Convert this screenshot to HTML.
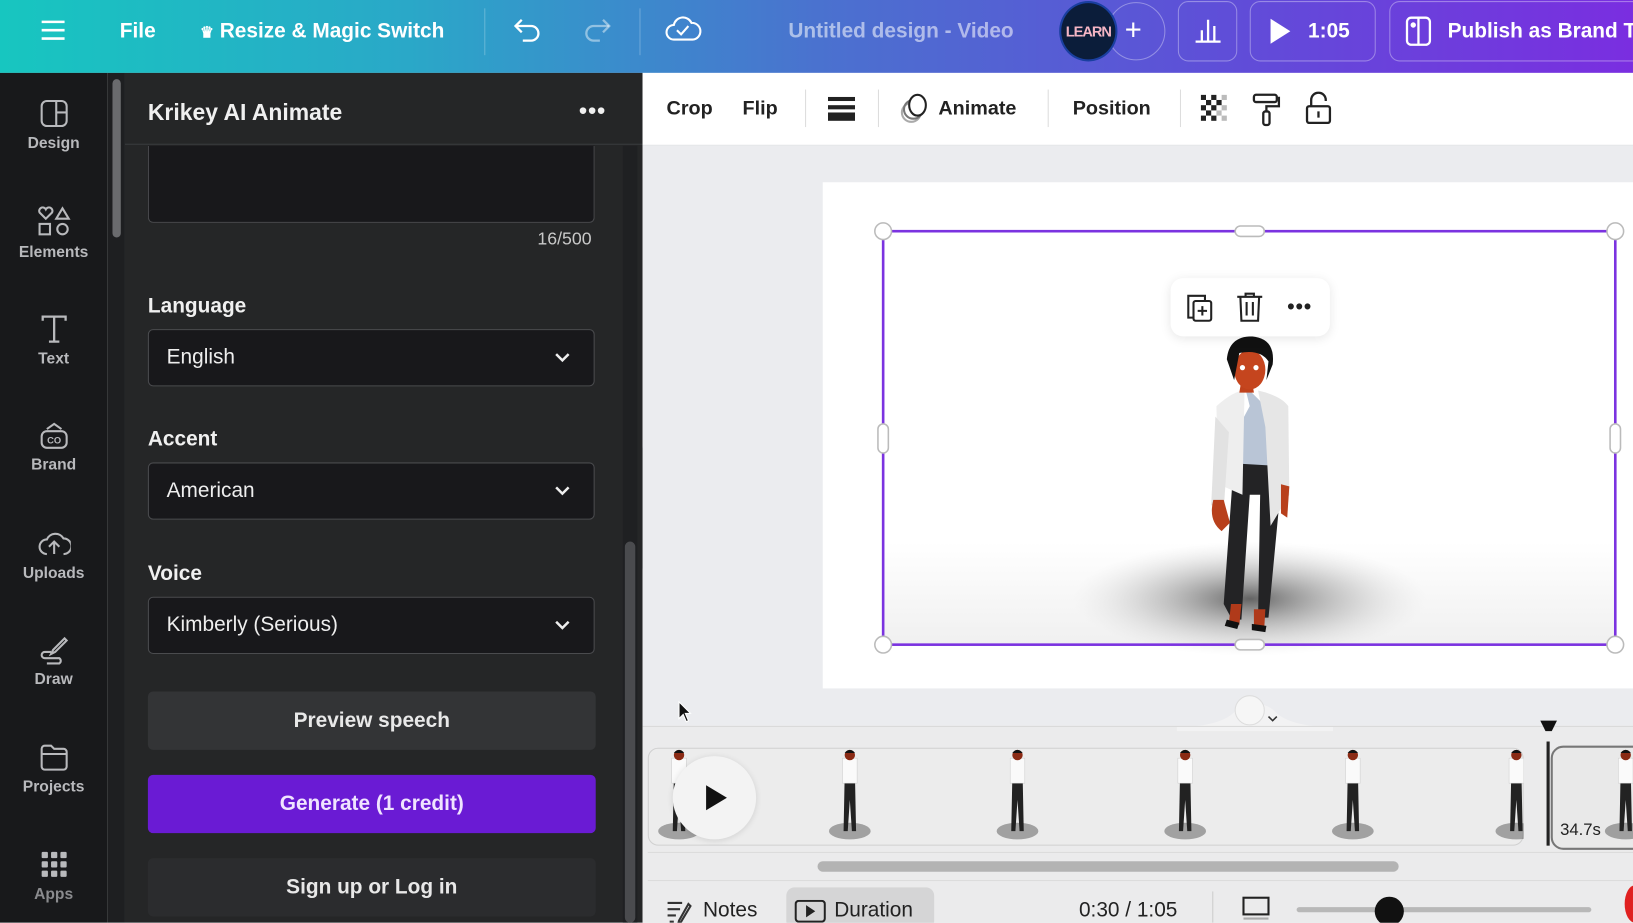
<!DOCTYPE html>
<html><head><meta charset="utf-8"><style>
*{margin:0;padding:0;box-sizing:border-box}
html,body{width:1633px;height:923px;overflow:hidden;background:#ebecef;font-family:"Liberation Sans",sans-serif}
#s{position:absolute;left:0;top:0;width:1568px;height:886px;transform:scale(1.04145);transform-origin:0 0;overflow:hidden}
.a{position:absolute}
.top{left:0;top:0;width:1568px;height:70px;background:linear-gradient(90deg,#17c6c0 0%,#2aa8c8 25%,#4a72cf 50%,#5f4ed8 75%,#7a2ee0 100%)}
.tt{color:#fff;font-size:20px;font-weight:bold;white-space:nowrap}
.pill{border:1.5px solid rgba(255,255,255,.35);border-radius:10px;height:58px;top:1px}
.side{left:0;top:70px;width:103px;height:816px;background:#18191b}
.si{width:103px;text-align:center;color:#b8b9bc;font-size:15px;font-weight:bold}
.si svg{display:block;margin:0 auto 6px}
.lab{color:#f0f0f0;font-size:20px;font-weight:bold}
.dd{left:142px;width:429px;height:55px;background:#18181b;border:1.5px solid #4a4b4e;border-radius:5px;color:#eee;font-size:20px;padding:15px 17px}
.dd svg{position:absolute;right:22px;top:20px}
.btn{left:142px;width:430px;height:56px;border-radius:5px;color:#e8e8e8;font-size:20px;font-weight:bold;text-align:center;line-height:56px}
.tb{color:#222;font-size:19px;font-weight:bold}
</style></head><body><div id="s">
<div class="a top"></div>
<svg class="a" style="left:39px;top:18px" width="24" height="22"><g stroke="#fff" stroke-width="2.5"><line x1="1" y1="3" x2="23" y2="3"/><line x1="1" y1="11" x2="23" y2="11"/><line x1="1" y1="19" x2="23" y2="19"/></g></svg>
<div class="a tt" style="left:115px;top:19px">File</div>
<div class="a tt" style="left:192px;top:19px"><span style="font-size:15px">♛</span> Resize &amp; Magic Switch</div>
<div class="a" style="left:465px;top:8px;width:1px;height:45px;background:rgba(255,255,255,.25)"></div>
<svg class="a" style="left:492px;top:15px" width="30" height="28" fill="none" stroke="#fff" stroke-width="2.2"><path d="M9 4 L3 10 L9 16"/><path d="M3 10 H18 a7 7 0 0 1 0 14 H10"/></svg>
<svg class="a" style="left:558px;top:15px" width="30" height="28" fill="none" stroke="rgba(255,255,255,.45)" stroke-width="2.2"><path d="M21 4 L27 10 L21 16"/><path d="M27 10 H12 a7 7 0 0 0 0 14 H18"/></svg>
<div class="a" style="left:614px;top:8px;width:1px;height:45px;background:rgba(255,255,255,.25)"></div>
<svg class="a" style="left:638px;top:13px" width="36" height="30" fill="none" stroke="#fff" stroke-width="2"><path d="M9 25 a7 7 0 0 1 0-14 a9 9 0 0 1 17-2 a7 7 0 0 1 1 16 Z"/><path d="M12 16 l4 4 l7-8"/></svg>
<div class="a" style="left:757px;top:19px;color:rgba(255,255,255,.55);font-size:20px;font-weight:bold">Untitled design - Video</div>
<div class="a" style="left:1063px;top:2px;width:56px;height:56px;border-radius:50%;border:1.5px solid rgba(255,255,255,.35)"></div>
<div class="a" style="left:1017px;top:1px;width:56px;height:58px;border-radius:50%;background:#0b1d3a;border:2px solid #1a3fa0;color:#f4b5c4;font-size:14px;font-weight:bold;text-align:center;line-height:54px;letter-spacing:-1px">LEARN</div>
<div class="a tt" style="left:1080px;top:13px;font-size:28px;font-weight:normal">+</div>
<div class="a pill" style="left:1131px;width:57px"></div>
<svg class="a" style="left:1145px;top:15px" width="30" height="28" stroke="#fff" stroke-width="2.2"><line x1="3" y1="25" x2="27" y2="25"/><line x1="9" y1="24" x2="9" y2="14"/><line x1="15" y1="24" x2="15" y2="4"/><line x1="21" y1="24" x2="21" y2="10"/></svg>
<div class="a pill" style="left:1200px;width:121px"></div>
<svg class="a" style="left:1218px;top:17px" width="22" height="26"><path d="M2 1 L21 13 L2 25 Z" fill="#fff"/></svg>
<div class="a tt" style="left:1256px;top:19px">1:05</div>
<div class="a pill" style="left:1334px;width:260px"></div>
<svg class="a" style="left:1348px;top:15px" width="28" height="30" fill="none" stroke="#fff" stroke-width="2.2"><rect x="3" y="2" width="22" height="26" rx="4"/><line x1="14" y1="2" x2="14" y2="28"/><circle cx="9" cy="9" r="1.5" fill="#fff"/></svg>
<div class="a tt" style="left:1390px;top:19px">Publish as Brand T</div>

<div class="a side"></div>
<div class="a" style="left:103px;top:70px;width:17px;height:816px;background:#1e1f21"></div>
<div class="a" style="left:108px;top:76px;width:8px;height:152px;border-radius:4px;background:#6a6b6e"></div>
<div class="a si" style="top:95px"><svg width="28" height="28" fill="none" stroke="#b8b9bc" stroke-width="2"><rect x="2" y="2" width="24" height="24" rx="5"/><line x1="16" y1="2" x2="16" y2="26"/><line x1="16" y1="13" x2="26" y2="13"/></svg>Design</div>
<div class="a si" style="top:198px"><svg width="34" height="30" fill="none" stroke="#b8b9bc" stroke-width="2"><path d="M9 12 L3 6 a3 3 0 0 1 6-3 a3 3 0 0 1 6 3 Z"/><path d="M25 2 L31 12 H19 Z"/><rect x="3" y="17" width="10" height="10"/><circle cx="25" cy="22" r="5"/></svg>Elements</div>
<div class="a si" style="top:302px"><svg width="28" height="28" fill="none" stroke="#b8b9bc" stroke-width="2.2"><path d="M3 6 V2 H25 V6 M14 2 V26 M9 26 H19"/></svg>Text</div>
<div class="a si" style="top:404px"><svg width="30" height="28" fill="none" stroke="#b8b9bc" stroke-width="2"><path d="M8 8 L15 3 L22 8"/><rect x="3" y="10" width="24" height="16" rx="5"/><text x="15" y="22" font-size="9" text-anchor="middle" fill="#b8b9bc" stroke="none" font-family="Liberation Sans" font-weight="bold">CO</text></svg>Brand</div>
<div class="a si" style="top:508px"><svg width="32" height="28" fill="none" stroke="#b8b9bc" stroke-width="2"><path d="M9 24 a7 7 0 0 1 0-14 a9 9 0 0 1 16-1 a7 7 0 0 1 0 15"/><path d="M16 24 V13 M11 17 l5-5 l5 5"/></svg>Uploads</div>
<div class="a si" style="top:610px"><svg width="30" height="28" fill="none" stroke="#b8b9bc" stroke-width="2"><path d="M25 3 L14 14 L12 18 L16 16 L27 5 Z"/><path d="M12 16 H6 a3 3 0 0 0 0 6 H20 a3 3 0 0 1 0 5 H8"/></svg>Draw</div>
<div class="a si" style="top:713px"><svg width="30" height="28" fill="none" stroke="#b8b9bc" stroke-width="2"><path d="M3 6 a3 3 0 0 1 3-3 H12 L15 6 H24 a3 3 0 0 1 3 3 V23 a3 3 0 0 1-3 3 H6 a3 3 0 0 1-3-3 Z"/><line x1="3" y1="11" x2="27" y2="11"/></svg>Projects</div>
<div class="a si" style="top:816px"><svg width="28" height="28" fill="#b8b9bc"><rect x="2" y="2" width="6" height="6" rx="1"/><rect x="11" y="2" width="6" height="6" rx="1"/><rect x="20" y="2" width="6" height="6" rx="1"/><rect x="2" y="11" width="6" height="6" rx="1"/><rect x="11" y="11" width="6" height="6" rx="1"/><rect x="20" y="11" width="6" height="6" rx="1"/><rect x="2" y="20" width="6" height="6" rx="1"/><rect x="11" y="20" width="6" height="6" rx="1"/><rect x="20" y="20" width="6" height="6" rx="1"/></svg><span style="color:#8a8b8e">Apps</span></div>

<div class="a" style="left:120px;top:70px;width:497px;height:816px;background:#252627"></div>
<div class="a" style="left:120px;top:138px;width:497px;height:1px;background:#3a3b3d"></div>
<div class="a" style="left:142px;top:95px;color:#f0f0f0;font-size:22px;font-weight:bold">Krikey AI Animate</div>
<div class="a" style="left:556px;top:94px;color:#f0f0f0;font-size:22px;font-weight:bold;letter-spacing:1px">•••</div>
<div class="a" style="left:142px;top:140px;width:429px;height:74px;background:#18181b;border:1.5px solid #4a4b4e;border-top:none;border-radius:0 0 5px 5px"></div>
<div class="a" style="left:516px;top:220px;color:#c8c8c8;font-size:17px">16/500</div>
<div class="a" style="left:598px;top:140px;width:14px;height:746px;background:#1f2022"></div>
<div class="a" style="left:600px;top:520px;width:10px;height:366px;border-radius:5px;background:#4a4b4e"></div>
<div class="a lab" style="left:142px;top:283px">Language</div>
<div class="a dd" style="top:316px">English<svg width="16" height="12" fill="none" stroke="#eee" stroke-width="2.4"><path d="M2 3 L8 9 L14 3"/></svg></div>
<div class="a lab" style="left:142px;top:411px">Accent</div>
<div class="a dd" style="top:444px">American<svg width="16" height="12" fill="none" stroke="#eee" stroke-width="2.4"><path d="M2 3 L8 9 L14 3"/></svg></div>
<div class="a lab" style="left:142px;top:540px">Voice</div>
<div class="a dd" style="top:573px">Kimberly (Serious)<svg width="16" height="12" fill="none" stroke="#eee" stroke-width="2.4"><path d="M2 3 L8 9 L14 3"/></svg></div>
<div class="a btn" style="top:664px;background:#333436">Preview speech</div>
<div class="a btn" style="top:744px;background:#6a1bd4;color:#f0e4ff">Generate (1 credit)</div>
<div class="a btn" style="top:824px;background:#2b2c2e">Sign up or Log in</div>
<svg class="a" style="left:617px;top:428px" width="20" height="120"><path d="M0 0 C0 10 18 12 18 30 V90 C18 108 0 110 0 120 Z" fill="#18191b"/><path d="M10 55 L6 59 L10 63" stroke="#ccc" stroke-width="2" fill="none"/></svg>

<div class="a" style="left:617px;top:70px;width:951px;height:70px;background:#fff;border-bottom:1px solid #e2e3e6"></div>
<div class="a tb" style="left:640px;top:94px">Crop</div>
<div class="a tb" style="left:713px;top:94px">Flip</div>
<div class="a" style="left:773px;top:86px;width:1px;height:36px;background:#ddd"></div>
<svg class="a" style="left:795px;top:93px" width="26" height="24" fill="#222"><rect x="0" y="0" width="26" height="4"/><rect x="0" y="8" width="26" height="4"/><rect x="0" y="15" width="26" height="8"/></svg>
<div class="a" style="left:843px;top:86px;width:1px;height:36px;background:#ddd"></div>
<svg class="a" style="left:862px;top:88px" width="32" height="32" fill="none" stroke-width="2"><circle cx="13" cy="20" r="9" stroke="#aaa"/><circle cx="15" cy="17" r="9" stroke="#777"/><ellipse cx="19" cy="13" rx="8" ry="10" stroke="#222" fill="#fff"/></svg>
<div class="a tb" style="left:901px;top:94px">Animate</div>
<div class="a" style="left:1006px;top:86px;width:1px;height:36px;background:#ddd"></div>
<div class="a tb" style="left:1030px;top:94px">Position</div>
<div class="a" style="left:1133px;top:86px;width:1px;height:36px;background:#ddd"></div>
<svg class="a" style="left:1153px;top:91px" width="28" height="28"><g fill="#222"><rect x="0" y="0" width="5" height="5"/><rect x="10" y="0" width="5" height="5"/><rect x="5" y="5" width="5" height="5"/><rect x="15" y="5" width="5" height="5"/><rect x="0" y="10" width="5" height="5"/><rect x="10" y="10" width="5" height="5"/><rect x="5" y="15" width="5" height="5"/><rect x="0" y="20" width="5" height="5"/><rect x="10" y="20" width="5" height="5"/></g><g fill="#bbb"><rect x="20" y="0" width="5" height="5"/><rect x="20" y="10" width="5" height="5"/><rect x="15" y="15" width="5" height="5"/><rect x="20" y="20" width="5" height="5"/></g></svg>
<svg class="a" style="left:1202px;top:88px" width="28" height="34" fill="none" stroke="#222" stroke-width="2.2"><rect x="2" y="3" width="22" height="7" rx="2"/><path d="M24 6 H26 V14 H14 V19"/><rect x="11" y="19" width="6" height="13" rx="2"/></svg>
<svg class="a" style="left:1253px;top:88px" width="26" height="32" fill="none" stroke="#222" stroke-width="2.2"><path d="M6 14 V8 a7 7 0 0 1 14 0 V9"/><rect x="2" y="14" width="22" height="16" rx="2"/><line x1="13" y1="19" x2="13" y2="25"/></svg>

<div class="a" style="left:617px;top:140px;width:951px;height:557px;background:#ebecef"></div>
<div class="a" style="left:790px;top:175px;width:778px;height:486px;background:#fff"></div>
<div class="a" style="left:848px;top:520px;width:703px;height:100px;background:linear-gradient(#fff,#f0f0f0)"></div>
<svg class="a" style="left:790px;top:175px" width="778" height="486">
<defs><radialGradient id="sh" cx="50%" cy="50%" r="50%"><stop offset="0" stroke-opacity="0" stop-color="#333" stop-opacity=".75"/><stop offset=".6" stop-color="#888" stop-opacity=".3"/><stop offset="1" stop-color="#ccc" stop-opacity="0"/></radialGradient></defs>
<ellipse cx="410" cy="400" rx="170" ry="55" fill="url(#sh)"/>
<path d="M395 265 L385 405 L393 420 L402 420 L410 300 L420 300 L418 418 L428 418 L442 270 Z" fill="#232325"/>
<path d="M392 405 l-2 18 l10 2 l2-20 Z" fill="#b03a1a"/><path d="M414 410 l0 15 l10 2 l1-17 Z" fill="#b03a1a"/>
<path d="M388 420 l12 3 l-2 6 l-12 -3Z" fill="#111"/><path d="M412 424 l14 2 l-1 6 l-13 -2Z" fill="#111"/>
<path d="M405 195 L410 215 L402 230 L397 270 L430 272 L432 230 L420 210 Z" fill="#b9c5d6"/>
<path d="M378 215 Q395 200 405 200 L403 300 L380 290 Z" fill="#eeeeee"/>
<path d="M418 200 Q440 205 447 215 L448 300 L430 330 L425 235 Z" fill="#e6e6e6"/>
<path d="M377 225 L373 310 L385 315 L390 240Z" fill="#e2e2e2"/>
<path d="M375 305 q-5 20 8 30 l8-8 l-6-22Z" fill="#b8401c"/>
<path d="M440 290 l8 2 l-2 30 l-6 -4Z" fill="#b8401c"/>
<path d="M402 190 l-2 12 l14 0 l-2-12Z" fill="#c0421c"/>
<ellipse cx="410" cy="180" rx="15" ry="19" fill="#c5451e"/>
<path d="M388 170 Q390 148 412 148 Q435 150 432 175 L426 190 L428 172 Q420 160 400 164 L395 190 Z" fill="#111"/>
<circle cx="403" cy="178" r="2.5" fill="#fff"/><circle cx="416" cy="178" r="2.5" fill="#fff"/>
<rect x="58" y="47" width="703" height="397" fill="none" stroke="#7b33e0" stroke-width="2.5"/>
<g fill="#fff" stroke="#bbb" stroke-width="1.5">
<circle cx="58" cy="47" r="8"/><circle cx="761" cy="47" r="8"/><circle cx="58" cy="444" r="8"/><circle cx="761" cy="444" r="8"/>
<rect x="396" y="42" width="28" height="10" rx="5"/><rect x="396" y="439" width="28" height="10" rx="5"/>
<rect x="53" y="232" width="10" height="28" rx="5"/><rect x="756" y="232" width="10" height="28" rx="5"/></g>
</svg>
<div class="a" style="left:1124px;top:267px;width:153px;height:56px;background:#fff;border-radius:12px;box-shadow:0 2px 10px rgba(0,0,0,.1)"></div>
<svg class="a" style="left:1137px;top:280px" width="30" height="30" fill="none" stroke="#222" stroke-width="2"><path d="M9 25 H4 V4 H20 V8"/><rect x="9" y="9" width="17" height="19" rx="2"/><path d="M17.5 14 V23 M13 18.5 H22"/></svg>
<svg class="a" style="left:1186px;top:279px" width="28" height="32" fill="none" stroke="#222" stroke-width="2"><path d="M2 6 H26 M10 6 V3 H18 V6"/><path d="M5 6 L6 29 H22 L23 6"/><path d="M11 11 V24 M17 11 V24"/></svg>
<div class="a" style="left:1236px;top:284px;font-size:20px;font-weight:bold;color:#222;letter-spacing:1px">•••</div>

<div class="a" style="left:617px;top:697px;width:951px;height:189px;background:#ebebec"></div>
<svg class="a" style="left:1130px;top:662px" width="150" height="40"><path d="M0 36 Q40 36 55 22 Q62 14 75 14 Q88 14 95 22 Q110 36 150 36 V40 H0Z" fill="#f2f2f3"/><circle cx="70" cy="20" r="14" fill="#f6f6f6" stroke="#ddd"/><path d="M88 26 l4 4 l4-4" stroke="#333" fill="none" stroke-width="1.5"/></svg>
<div class="a" style="left:617px;top:697px;width:951px;height:1px;background:#d8d8d8"></div>
<svg class="a" style="left:1478px;top:690px" width="18" height="16"><path d="M1 2 H17 L12 12 H6 Z" fill="#111"/></svg>
<div class="a" style="left:622px;top:718px;width:841px;height:94px;border:1.5px solid #d0d0d0;border-radius:10px;background:#ececec"></div>
<svg class="a" style="left:622px;top:718px" width="841" height="94">
<defs><g id="f"><ellipse cx="0" cy="80" rx="20" ry="8" fill="#555" opacity=".5"/><path d="M-5 30 L-6 80 L-2 80 L0 50 L2 80 L6 80 L5 30 Z" fill="#222"/><rect x="-7" y="10" width="14" height="24" fill="#fafafa" stroke="#ccc" stroke-width=".5"/><circle cx="0" cy="7" r="5" fill="#8a2a14"/><path d="M-5 5 Q0 -1 5 5" fill="#111"/></g></defs>
<use href="#f" x="30" y="0"/><use href="#f" x="194" y="0"/><use href="#f" x="355" y="0"/><use href="#f" x="516" y="0"/><use href="#f" x="677" y="0"/><use href="#f" x="834" y="0"/>
</svg>
<div class="a" style="left:646px;top:726px;width:80px;height:80px;border-radius:50%;background:#f3f3f3;box-shadow:0 1px 6px rgba(0,0,0,.12)"></div>
<svg class="a" style="left:676px;top:753px" width="24" height="26"><path d="M2 1 L22 13 L2 25 Z" fill="#111"/></svg>
<div class="a" style="left:1485px;top:712px;width:3px;height:100px;background:#222"></div>
<div class="a" style="left:1489px;top:716px;width:100px;height:100px;border:2px solid #777;border-radius:12px;background:#e9e9e9"></div>
<svg class="a" style="left:1489px;top:718px" width="79" height="94"><use href="#f" x="72" y="0"/></svg>
<div class="a" style="left:1498px;top:789px;font-size:16px;color:#222">34.7s</div>
<div class="a" style="left:622px;top:818px;width:946px;height:1px;background:#dcdcdc"></div>
<div class="a" style="left:785px;top:827px;width:558px;height:10px;border-radius:5px;background:#b3b3b3"></div>
<div class="a" style="left:622px;top:845px;width:946px;height:1px;background:#dcdcdc"></div>
<svg class="a" style="left:639px;top:864px" width="26" height="24" fill="none" stroke="#333" stroke-width="2"><path d="M2 3 H16 M2 9 H14 M2 15 H10 M4 21 H8"/><path d="M22 4 L13 20 L12 24 L15 21 L24 6Z"/></svg>
<div class="a" style="left:675px;top:863px;font-size:20px;color:#222">Notes</div>
<div class="a" style="left:755px;top:852px;width:142px;height:40px;border-radius:8px;background:#d5d5d6"></div>
<svg class="a" style="left:763px;top:864px" width="30" height="22" fill="none" stroke="#222" stroke-width="2"><rect x="1" y="1" width="28" height="20" rx="3"/><path d="M12 7 L18 11 L12 15Z" fill="#222"/></svg>
<div class="a" style="left:801px;top:863px;font-size:20px;color:#222">Duration</div>
<div class="a" style="left:1036px;top:863px;font-size:20px;color:#222">0:30 / 1:05</div>
<div class="a" style="left:1164px;top:856px;width:1px;height:30px;background:#ccc"></div>
<svg class="a" style="left:1192px;top:860px" width="28" height="26" fill="none" stroke="#222" stroke-width="2"><rect x="2" y="2" width="24" height="16"/><path d="M2 22 H26" stroke="#aaa"/></svg>
<div class="a" style="left:1245px;top:871px;width:283px;height:5px;border-radius:3px;background:#b8b8b8"></div>
<div class="a" style="left:1320px;top:861px;width:28px;height:28px;border-radius:50%;background:#111"></div>
<div class="a" style="left:1560px;top:850px;width:20px;height:36px;border-radius:50%;background:#e02020"></div>
<svg class="a" style="left:650px;top:672px" width="16" height="24"><path d="M2 2 L2 18 L6 14 L9 21 L11 20 L8 13 L13 13 Z" fill="#111" stroke="#fff" stroke-width="1"/></svg>
</div></body></html>
